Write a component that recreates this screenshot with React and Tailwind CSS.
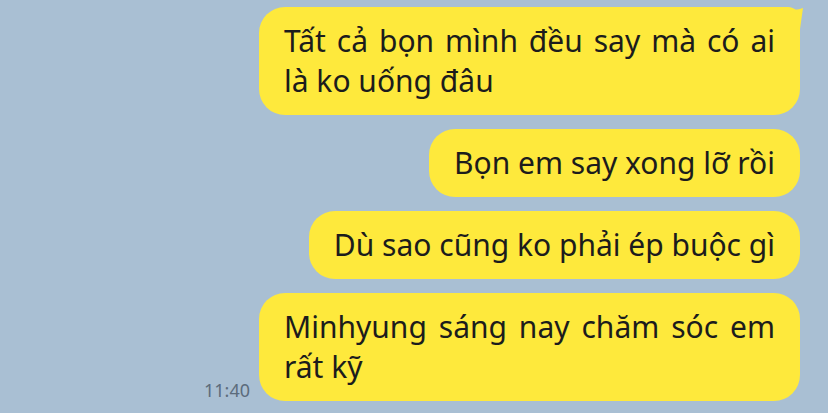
import React from 'react'

const font = { fontFamily: '"Noto Sans", "Liberation Sans", sans-serif' }

function Bubble({ lines, tail, width }) {
  return (
    <div
      className={`relative bg-[#fee93c] rounded-[26px] px-[25px] py-[14px] text-[30px] leading-[40px] text-[#1c1c1c] ${tail ? 'rounded-tr-[12px]' : ''} ${width || ''}`}
    >
      {tail && (
        <svg className="absolute top-0 right-[-4px]" width="24" height="24" viewBox="0 0 24 24">
          <path d="M4 0 Q 14 5 23 1 L 20 22 L 4 22 Z" fill="#fee93c" />
        </svg>
      )}
      {lines.map((l, i) => (
        <div
          key={i}
          className={`relative whitespace-nowrap ${i < lines.length - 1 ? 'text-justify [text-align-last:justify]' : ''}`}
        >
          {l}
        </div>
      ))}
    </div>
  )
}

export default function App() {
  return (
    <div className="w-[828px] h-[413px] overflow-hidden bg-[#a9bfd3] pt-[7px] pr-[28px] flex flex-col items-end gap-[14px]" style={font}>
      <Bubble tail width="w-[541px]" lines={['Tất cả bọn mình đều say mà có ai', 'là ko uống đâu']} />
      <Bubble lines={['Bọn em say xong lỡ rồi']} />
      <Bubble lines={['Dù sao cũng ko phải ép buộc gì']} />
      <div className="flex items-end gap-[9px]">
        <span className="text-[18px] leading-[22px] text-[#5c6c7c]">11:40</span>
        <Bubble width="w-[541px]" lines={['Minhyung sáng nay chăm sóc em', 'rất kỹ']} />
      </div>
    </div>
  )
}
